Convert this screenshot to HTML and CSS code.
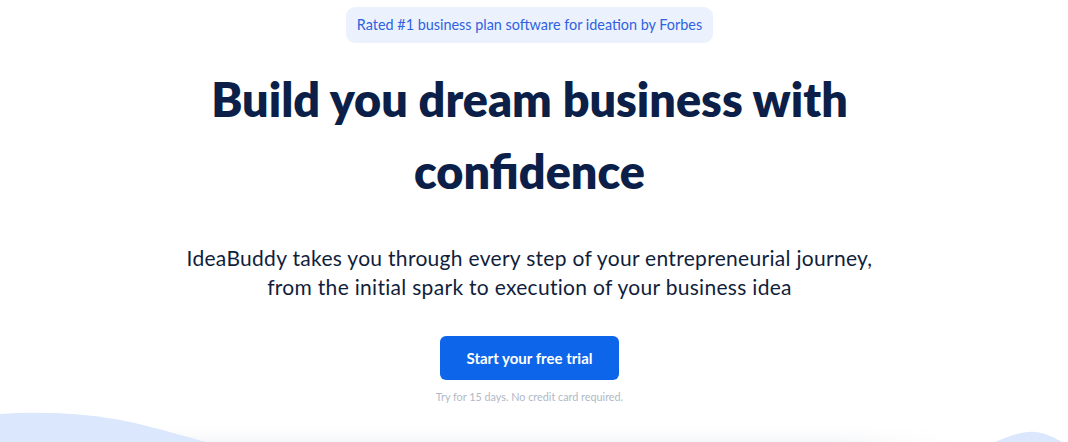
FILE: index.html
```html
<!DOCTYPE html>
<html lang="en">
<head>
<meta charset="utf-8">
<title>IdeaBuddy</title>
<link rel="stylesheet" href="styles.css">
</head>
<body>
<div class="page">
  <section class="hero">
    <div class="badge">Rated #1 business plan software for ideation by Forbes</div>
    <h1 class="title">Build you dream business with<br>confidence</h1>
    <p class="lead">IdeaBuddy takes you through every step of your entrepreneurial journey,<br>from the initial spark to execution of your business idea</p>
    <a class="cta" href="#">Start your free trial</a>
    <p class="note">Try for 15 days. No credit card required.</p>
  </section>
  <div class="deco" aria-hidden="true">
    <svg width="1068" height="42" viewBox="0 0 1068 42">
      <defs>
        <linearGradient id="g" x1="0" y1="0" x2="0" y2="1">
          <stop offset="0" stop-color="#ffffff" stop-opacity="0"/>
          <stop offset="1" stop-color="#f4f5f8"/>
        </linearGradient>
        <linearGradient id="h" x1="0" y1="0" x2="1" y2="0">
          <stop offset="0" stop-color="#fff" stop-opacity="1"/>
          <stop offset="0.85" stop-color="#fff" stop-opacity="1"/>
          <stop offset="1" stop-color="#fff" stop-opacity="0"/>
        </linearGradient>
        <mask id="m">
          <rect x="150" y="0" width="800" height="42" fill="url(#h)"/>
        </mask>
      </defs>
      <rect x="150" y="22" width="800" height="20" fill="url(#g)" mask="url(#m)"/>
      <path d="M0 14 C 40 11, 90 13, 130 22 C 160 29, 185 36, 205 42 L 0 42 Z" fill="#dbe7fd"/>
      <path d="M995 42 C 1010 36, 1022 31, 1035 32 C 1046 33, 1055 38, 1062 42 Z" fill="#dbe7fd"/>
    </svg>
  </div>
</div>
</body>
</html>
```
FILE: styles.css
```css
* { box-sizing: border-box; }
html, body { margin: 0; padding: 0; background: #ffffff; }
body { font-family: Lato, "Noto Sans", sans-serif; }
.page { position: relative; width: 1068px; height: 442px; overflow: hidden; }
.hero { display: flex; flex-direction: column; align-items: center; padding: 7px 9px 0 0; }
.badge {
  background: #ebf2fe;
  color: #2f62e0;
  font-size: 14.4px;
  height: 36px;
  line-height: 36px;
  padding: 0 11px;
  border-radius: 9px;
}
.title {
  margin: 20px 0 0;
  font-size: 46.7px;
  font-weight: 800;
  line-height: 72px;
  color: #0b1f48;
  text-align: center;
  letter-spacing: 0;
}
.lead {
  margin: 36px 0 0;
  font-size: 21px;
  letter-spacing: 0.3px;
  line-height: 29px;
  color: #111e3c;
  text-align: center;
}
.cta {
  margin-top: 35px;
  width: 179px;
  height: 44px;
  display: flex;
  align-items: center;
  justify-content: center;
  background: #0d66e9;
  color: #ffffff;
  font-weight: 700;
  font-size: 15px;
  border-radius: 6px;
  text-decoration: none;
}
.note {
  margin: 10px 0 0;
  font-size: 10.8px;
  color: #b1b8c6;
}
.deco { position: absolute; left: 0; bottom: 0; width: 1068px; height: 42px; }
.deco svg { display: block; }
```
